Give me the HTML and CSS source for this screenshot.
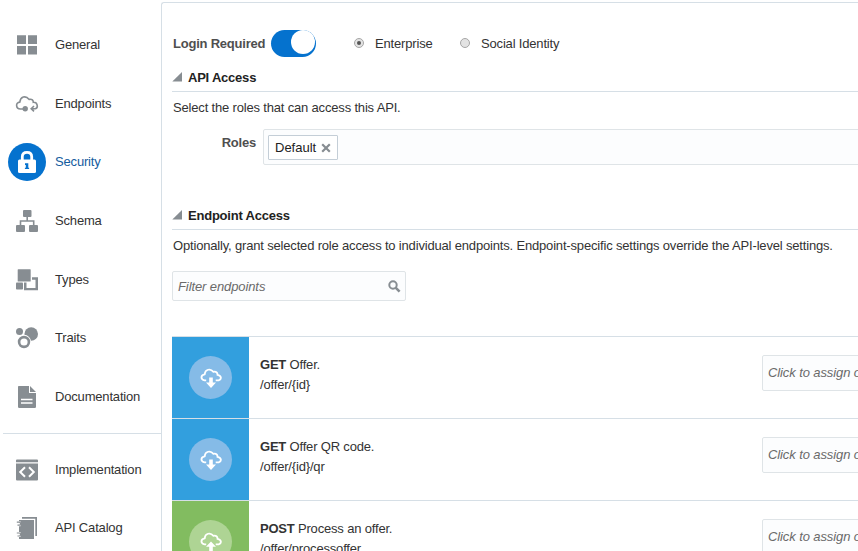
FILE: index.html
```html
<!DOCTYPE html>
<html lang="en">
<head>
<meta charset="utf-8">
<title>API Security</title>
<link rel="stylesheet" href="styles.css">
</head>
<body>
<div class="app">
  <nav class="sidebar">
    <div class="nav-group">
      <a class="nav-item"><span class="nav-icon"><svg width="24" height="24" viewBox="0 0 24 24"><path d="M2 2.300h9v8.700H2zM13 2.300h9v8.700h-9zM2 13h9v8.500H2zM13 13h9v8.500h-9z"/></svg></span><span>General</span></a>
      <a class="nav-item"><span class="nav-icon"><svg width="24" height="24" viewBox="0 0 24 24"><path class="line" d="M8.200 17H5.400C.6 16.800.3 10.400 4.800 10.100C5.400 4.900 10.300 2.800 14.200 7.400C17.200 6.800 18.300 8.400 18.300 10.300C22.800 10.100 23.500 15.800 20.300 16.700H16.500M19 14l-2.800 2.700L19 19.400"/><circle cx="10.200" cy="16.800" r="2.700"/></svg></span><span>Endpoints</span></a>
      <a class="nav-item active"><span class="nav-icon"><svg width="24" height="24" viewBox="0 0 24 24"><path class="shackle" d="M7.300 11V6.800Q7.300 2.400 12 2.400t4.700 4.400V11"/><rect x="3" y="9.500" width="18" height="13.500" rx="1.500"/><path class="keyhole" d="M10 13.300h3.300v4.500h.8v1.300h-4.200v-1.300h.9v-2.900H10z"/></svg></span><span>Security</span></a>
      <a class="nav-item"><span class="nav-icon"><svg width="24" height="24" viewBox="0 0 24 24"><rect x="8" y="1" width="8.500" height="7" rx="1"/><rect x="1" y="16" width="9" height="7" rx="1"/><rect x="14" y="16" width="9" height="7" rx="1"/><path class="line" d="M12.200 8v4M5.500 16v-4h13.200v4"/></svg></span><span>Schema</span></a>
      <a class="nav-item"><span class="nav-icon"><svg width="24" height="24" viewBox="0 0 24 24"><rect x="2.700" y="1.200" width="13" height="12.300" rx=".6"/><rect x="1" y="14.500" width="7" height="7" rx=".8"/><path d="M17 9.300h6v13H9v-7.700h2.500V20h9v-8.300H17z"/></svg></span><span>Types</span></a>
      <a class="nav-item"><span class="nav-icon"><svg width="24" height="24" viewBox="0 0 24 24"><circle cx="4.500" cy="5.500" r="3.500"/><circle cx="16.200" cy="8" r="6.800"/><circle cx="9" cy="16" r="7.200" class="gap"/><circle class="ring" cx="9" cy="16" r="4.900"/></svg></span><span>Traits</span></a>
      <a class="nav-item"><span class="nav-icon"><svg width="24" height="24" viewBox="0 0 24 24"><path d="M3.800 1H14v7h7v13.800q0 1.200-1.200 1.200H4.200Q3 23 3 21.800V1.800Q3 1 3.800 1zM15 1l6 6h-6z"/><path class="cut" d="M6 14.500h11.500M6 18h11.500"/></svg></span><span>Documentation</span></a>
    </div>
    <div class="nav-group lower">
      <a class="nav-item"><span class="nav-icon"><svg width="24" height="24" viewBox="0 0 24 24"><path d="M2 1.500h20q1 0 1 1V4.200H1V2.500q0-1 1-1zM1 5.600h22v16q0 1-1 1H2q-1 0-1-1z"/><path class="code" d="M10 9.200L5.200 14l4.800 4.800M14 9.200l4.800 4.800-4.800 4.800"/></svg></span><span>Implementation</span></a>
      <a class="nav-item"><span class="nav-icon"><svg width="24" height="24" viewBox="0 0 24 24"><path d="M7 1h15v19h-1.700V2.700H7zM4 4h15v19H4z"/><path class="rings" d="M3.500 7.700H5.500M3.500 18.500H5.500"/><path class="binder" d="M1.800 6.200h2.500q1.200 0 1.200 1.500t-1.200 1.500H2.500M1.800 17h2.500q1.200 0 1.200 1.500t-1.200 1.500H2.500"/></svg></span><span>API Catalog</span></a>
    </div>
  </nav>
  <main class="panel">
    <div class="login-row">
      <strong class="label">Login Required</strong>
      <span class="toggle"><span class="knob"></span></span>
      <span class="radio on"></span><span class="enterprise">Enterprise</span>
      <span class="radio"></span><span>Social Identity</span>
    </div>
    <h2><svg width="10" height="10" viewBox="0 0 10 10"><path d="M10 0v9.500H.3z"/></svg>API Access</h2>
    <p>Select the roles that can access this API.</p>
    <div class="roles-row">
      <strong class="label">Roles</strong>
      <div class="roles-field"><span class="chip">Default<svg width="10" height="10" viewBox="0 0 10 10"><path d="M1.200 1.200l7.600 7.600M8.800 1.200L1.200 8.800"/></svg></span></div>
    </div>
    <h2><svg width="10" height="10" viewBox="0 0 10 10"><path d="M10 0v9.500H.3z"/></svg>Endpoint Access</h2>
    <p class="hint">Optionally, grant selected role access to individual endpoints. Endpoint-specific settings override the API-level settings.</p>
    <div class="filter"><span>Filter endpoints</span><svg width="13" height="13" viewBox="0 0 13 13"><circle cx="5" cy="5" r="3.700"/><path class="handle" d="M7.600 7.600l4 4"/></svg></div>
    <div class="endpoints">
      <div class="endpoint get">
        <div class="method"><span class="disc"><svg width="22" height="22" viewBox="0 0 22 22"><path class="cloud" d="M6.200 13.300H4.600C.3 12.700.500 7.700 4.700 7.300C5 2.300 10.500 1 13.300 4.800C16 4 17.700 5.600 17.500 7.800C21.800 8.500 21.800 12.500 18.700 13.300H15.700"/><path class="arrow" d="M9.200 10.500h3.600v5H16L11 21l-5-5.500h3.200z"/></svg></span></div>
        <div class="desc"><div><b>GET</b> Offer.</div><div>/offer/{id}</div></div>
        <div class="assign">Click to assign one or more roles</div>
      </div>
      <div class="endpoint get">
        <div class="method"><span class="disc"><svg width="22" height="22" viewBox="0 0 22 22"><path class="cloud" d="M6.200 13.300H4.600C.3 12.700.500 7.700 4.700 7.300C5 2.300 10.500 1 13.300 4.800C16 4 17.700 5.600 17.500 7.800C21.800 8.500 21.800 12.500 18.700 13.300H15.700"/><path class="arrow" d="M9.200 10.500h3.600v5H16L11 21l-5-5.500h3.200z"/></svg></span></div>
        <div class="desc"><div><b>GET</b> Offer QR code.</div><div>/offer/{id}/qr</div></div>
        <div class="assign">Click to assign one or more roles</div>
      </div>
      <div class="endpoint post">
        <div class="method"><span class="disc"><svg width="22" height="22" viewBox="0 0 22 22"><path class="cloud" d="M6.200 13.300H4.600C.3 12.700.500 7.700 4.700 7.300C5 2.300 10.500 1 13.300 4.800C16 4 17.700 5.600 17.500 7.800C21.800 8.500 21.800 12.500 18.700 13.300H15.700"/><path class="arrow" d="M11 10.500l5 5.300h-3.200V21H9.200v-5.200H6z"/></svg></span></div>
        <div class="desc"><div><b>POST</b> Process an offer.</div><div>/offer/processoffer</div></div>
        <div class="assign">Click to assign one or more roles</div>
      </div>
    </div>
  </main>
</div>
</body>
</html>
```
FILE: styles.css
```css
* { box-sizing: border-box; }
body {
  margin: 0;
  overflow: hidden;
  background: #fff;
  color: #333;
  font: 13px/20px "Liberation Sans", Arial, sans-serif;
  letter-spacing: -0.174px;
}
svg { flex: none; display: block; }
.app { display: flex; height: 551px; overflow: hidden; }

.sidebar { flex: none; width: 161px; padding: 15px 0 0 3px; }
.nav-group { height: 418px; padding-top: 0.6px; }
.nav-group.lower { border-top: 1px solid #d6dfe6; padding-top: 7px; }
.nav-item { display: flex; align-items: center; height: 58.7px; padding-left: 5px; gap: 9px; }
.nav-group.lower .nav-item { height: 58.2px; }
.nav-icon {
  display: flex; align-items: center; justify-content: center;
  width: 38px; height: 38px; border-radius: 50%;
}
.nav-icon svg { fill: #878d92; }
.nav-icon .gap { fill: #fff; }
.nav-icon .line { fill: none; stroke: #878d92; stroke-width: 1.6; }
.nav-icon .ring { fill: none; stroke: #878d92; stroke-width: 2.6; }
.nav-icon .cut { stroke: #fff; stroke-width: 1.4; }
.nav-icon .code { fill: none; stroke: #fff; stroke-width: 2; }
.nav-icon .rings { fill: none; stroke: #fff; stroke-width: 5; }
.nav-icon .binder { fill: none; stroke: #878d92; stroke-width: 1.2; }
.active { color: #145c9e; }
.active .nav-icon { background: #0572ce; }
.active .nav-icon svg { fill: #fff; }
.active .shackle { fill: none; stroke: #fff; stroke-width: 2.8; }
.active .nav-icon .keyhole { fill: #0572ce; }

.panel {
  flex: none; width: 720px; height: 600px; margin-top: 2px; padding-left: 10px;
  border: 1px solid #d6dfe6; border-right: 0; border-radius: 3px 0 0 0;
}
b, strong, h2 { letter-spacing: -0.22px; }
.label { color: #4f4f4f; }
.login-row { display: flex; align-items: center; height: 28px; margin: 26px 0 0 1px; }
.login-row .label { width: 98px; padding-top: 2px; white-space: nowrap; }
.toggle {
  display: flex; justify-content: flex-end; width: 45px; height: 27px;
  margin-right: 38px; padding: 0 1px; border-radius: 14px; background: #0572ce;
}
.knob { width: 24px; height: 24px; border-radius: 50%; background: #fff; }
.radio {
  display: flex; align-items: center; justify-content: center;
  width: 10px; height: 10px; margin-right: 10px;
  border: 1px solid #a6a6a6; border-radius: 50%; background: #e3e3e3;
}
.radio.on::after { content: ""; width: 4px; height: 4px; border-radius: 50%; background: #555; }
.enterprise { width: 86px; }
.login-row .radio + span { padding: 2px 0 0 1px; }
h2 {
  display: flex; align-items: center; gap: 6px; height: 30px; margin: 5px 0 0;
  padding-top: 2px; border-bottom: 1px solid #d6dfe6; font-size: 13px; color: #222;
}
h2 svg { margin-top: -2px; fill: #878d92; }
p { margin: 6px 0 0 1px; white-space: nowrap; }
.roles-row { display: flex; margin-top: 11px; }
.roles-row .label { width: 91px; padding: 4px 7px 0 0; text-align: right; }
.roles-field { flex: 1; height: 36px; padding: 5px 4px; border: 1px solid #dfe4e7; background: #fcfdfe; border-radius: 2px; }
.chip {
  display: flex; align-items: center; justify-content: space-between;
  width: 70px; height: 25px; padding: 0 6px; letter-spacing: 0;
  border: 1px solid #c4ced7; border-radius: 1px; background: #fff; color: #222;
}
.chip path { stroke: #878d92; stroke-width: 2.2; }
.roles-row + h2 { margin-top: 35px; }
.filter {
  display: flex; align-items: center; justify-content: space-between;
  width: 234px; height: 30px; margin-top: 15px; padding: 0 4px 0 5px;
  border: 1px solid #dfe4e7; border-radius: 2px; background: #fcfdfe; color: #6a6a6a; font-style: italic;
}
.filter, .assign { letter-spacing: -0.1px; }
.filter span { padding-top: 2px; }
.filter svg { fill: none; stroke: #878d92; stroke-width: 2; }
.filter .handle { stroke-width: 2.6; }
.endpoints { margin-top: 35px; }
.endpoint { display: flex; height: 82px; border-top: 1px solid #d6dfe6; }
.method { flex: none; display: flex; align-items: center; justify-content: center; width: 77px; background: #329fde; }
.disc {
  display: flex; align-items: center; justify-content: center;
  width: 43px; height: 43px; border-radius: 50%; background: #85bbe7;
}
.post .method { background: #82bc60; }
.post .disc { background: #aed494; }
.cloud { fill: none; stroke: #fff; stroke-width: 1.8; }
.arrow { fill: #fff; }
.desc { flex: none; width: 513px; padding: 18px 0 0 11px; }
.assign {
  flex: none; width: 130px; height: 36px; margin-top: 18px; padding: 7px 5px;
  border: 1px solid #dfe4e7; border-radius: 2px; background: #fcfdfe; color: #6a6a6a;
  font-style: italic; white-space: nowrap; overflow: hidden;
}
```
